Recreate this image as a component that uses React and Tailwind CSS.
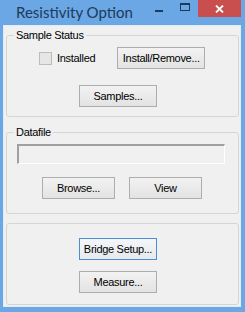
import React from 'react'

function Button({ label, width, isDefault }) {
  return (
    <button
      className={
        isDefault
          ? 'block h-[22px] border border-[#4a8fd6] bg-gradient-to-b from-[#f4f6f9] to-[#e6e9ee] text-[11px] tracking-[-0.3px] text-black'
          : 'block h-[22px] border border-[#adadad] bg-gradient-to-b from-[#f2f2f2] to-[#e3e3e3] text-[11px] tracking-[-0.3px] text-black'
      }
      style={{ width }}
    >
      {label}
    </button>
  )
}

function GroupBox({ title, className, children }) {
  return (
    <fieldset className={`ml-[2px] w-[233px] rounded-[3px] border border-[#d5d5d5] ${className}`}>
      {title && (
        <legend className="ml-[7px] px-[2px] text-[11px] leading-[12px] tracking-[-0.3px] text-black">
          {title}
        </legend>
      )}
      {children}
    </fieldset>
  )
}

export default function App() {
  return (
    <div className="flex h-[312px] w-[245px] flex-col bg-[#6aa7e4] font-['Liberation_Sans',Arial,sans-serif]">
      {/* title bar */}
      <div className="flex h-[25px] shrink-0 items-start">
        <span className="pl-[16px] pt-[3px] font-['Lato',sans-serif] text-[15px] leading-[18px] text-[#1d3a5c]">
          Resistivity Option
        </span>
        <div className="ml-auto flex">
          <div className="flex h-[17px] w-[26px] items-center justify-center pt-[5px]">
            <div className="h-[2px] w-[8px] bg-[#1d3a5c]" />
          </div>
          <div className="flex h-[17px] w-[26px] items-start justify-center pt-[3px]">
            <div className="h-[8px] w-[10px] border border-t-2 border-[#1d3a5c]" />
          </div>
          <div className="flex h-[17px] w-[43px] items-center justify-center bg-[#c94f4f]">
            <svg width="9" height="8" viewBox="0 0 9 8">
              <path d="M1 0.5 L8 7.5 M8 0.5 L1 7.5" stroke="#fff" strokeWidth="1.8" />
            </svg>
          </div>
          <div className="w-[4px]" />
        </div>
      </div>

      {/* client area */}
      <div className="mb-[5px] ml-[3px] flex h-[282px] w-[238px] flex-col border border-[#e2ecf6] bg-[#f0f0f0]">
        <GroupBox title="Sample Status" className="mt-[3px] h-[88px]">
          <div className="mt-[6px] flex h-[22px] items-center">
            <div className="ml-[32px] h-[13px] w-[13px] border border-[#bcbcbc] bg-[#e6e6e6]" />
            <span className="ml-[5px] text-[11px] tracking-[-0.3px] text-black">Installed</span>
            <div className="ml-[22px] flex">
              <Button label="Install/Remove..." width="88px" />
            </div>
          </div>
          <div className="mt-[16px] flex pl-[72px]">
            <Button label="Samples..." width="78px" />
          </div>
        </GroupBox>

        <GroupBox title="Datafile" className="mt-[9px] h-[88px]">
          <div className="ml-[10px] mt-[6px] h-[20px] w-[208px] border-l-2 border-t-2 border-b border-r border-l-[#a0a0a0] border-t-[#a0a0a0] border-b-[#ffffff] border-r-[#ffffff] bg-[#f0f0f0]" />
          <div className="mt-[13px] flex gap-[14px] pl-[35px]">
            <Button label="Browse..." width="73px" />
            <Button label="View" width="73px" />
          </div>
        </GroupBox>

        <GroupBox className="mt-[9px] h-[82px]">
          <div className="flex flex-col gap-[11px] pl-[72px] pt-[14px]">
            <Button label="Bridge Setup..." width="78px" isDefault />
            <Button label="Measure..." width="78px" />
          </div>
        </GroupBox>
      </div>
    </div>
  )
}
